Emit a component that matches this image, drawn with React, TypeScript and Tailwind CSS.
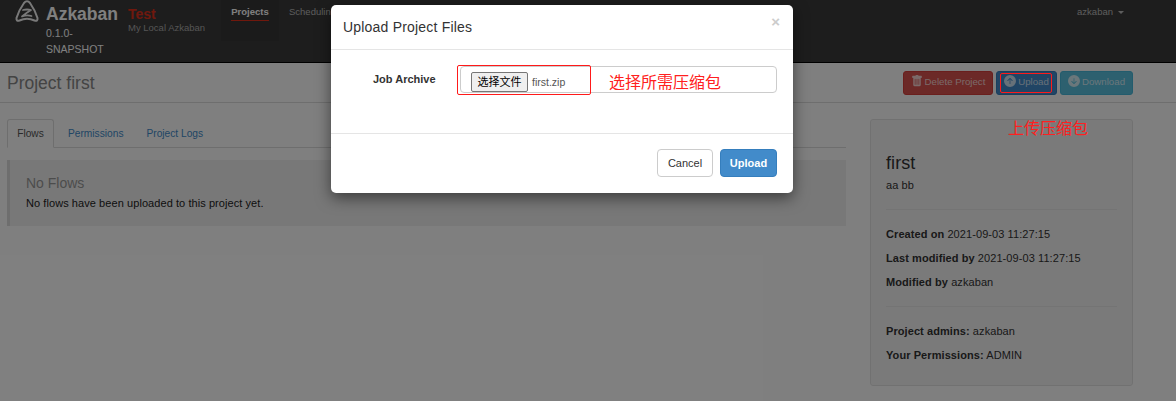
import React from "react";
import { BsArrowUpCircleFill, BsArrowDownCircleFill, BsTrashFill } from "react-icons/bs";

const sans = "font-['Liberation_Sans',Arial,'Noto_Sans_CJK_SC',sans-serif]";

function Logo() {
  return (
    <svg width="24" height="23" viewBox="0 0 24 23" fill="none" stroke="#f2f2f2" strokeWidth="2" strokeLinejoin="round" strokeLinecap="round">
      <path d="M9 3 Q12 -0.5 15 3 Q20 10 22.5 18 Q23 21.5 19.5 20.5 Q12 17 4.5 20.5 Q1 21.5 1.5 18 Q4 10 9 3 Z" />
      <path d="M8 10 Q12 9 16 10 Q11 13 7 16.5 Q12 14.5 16.5 16" strokeWidth="1.8" />
    </svg>
  );
}

function Btn({ bg, border, text, icon, extra }: { bg: string; border: string; text: string; icon: React.ReactNode; extra: string }) {
  return (
    <div className={`flex items-center justify-center whitespace-nowrap h-[24px] rounded-[3px] border gap-[2px] text-[9.7px] text-white/75 ${bg} ${border} ${extra}`}>
      <span className="-mt-[3px]">{icon}</span>
      <span>{text}</span>
    </div>
  );
}

export default function App() {
  return (
    <div className={`relative w-[1176px] h-[401px] overflow-hidden bg-white ${sans}`}>
      {/* navbar */}
      <div className="relative h-[63px] bg-[#3a3a3a] border-b border-black flex">
        <div className="pl-[15px] shrink-0"><Logo /></div>
        <div className="ml-[7px] w-[82px] shrink-0">
          <div className="text-[17.5px] font-bold leading-[20px] mt-[4px] text-white">Azkaban</div>
          <div className="text-[10.5px] leading-[16px] mt-[1px] text-white">0.1.0-<br />SNAPSHOT</div>
        </div>
        <div className="w-[93px] shrink-0">
          <div className="text-[14px] font-bold leading-[16px] mt-[6px] text-[#e0301a]">Test</div>
          <div className="text-[9.5px] leading-[12px] text-[#aaaaaa]">My Local Azkaban</div>
        </div>
        <div className="w-[58px] h-[41px] bg-[#363636] shrink-0 flex flex-col items-center pt-[6px]">
          <div className="text-[9.5px] leading-[12px] font-bold text-white pb-[2px] border-b border-[#e0301a]">Projects</div>
        </div>
        <div className="ml-[10px] pt-[6px] text-[9.5px] leading-[12px] text-[#bbbbbb]">Scheduling</div>
        <div className="ml-auto mr-[52px] pt-[6px] text-[9.5px] leading-[12px] text-[#bbbbbb] flex items-start gap-[5px] h-[18px]">
          azkaban
          <span className="mt-[5px] w-0 h-0 border-x-[3px] border-t-[3px] border-x-transparent border-t-[#bbbbbb]" />
        </div>
      </div>

      {/* project header */}
      <div className="h-[40px] bg-[#fefefe] border-b border-[#dddddd] flex items-center pl-[7px] pr-[43px]">
        <div className="text-[17.5px] text-[#888888] leading-[20px]">Project first</div>
        <div className="ml-auto flex gap-[3px]">
          <Btn bg="bg-[#d9534f]" border="border-[#d43f3a]" text="Delete Project" icon={<BsTrashFill size={12} />} extra="w-[90px]" />
          <Btn bg="bg-[#428bca]" border="border-[#357ebd]" text="Upload" icon={<BsArrowUpCircleFill size={12} />} extra="w-[61px]" />
          <Btn bg="bg-[#5bc0de]" border="border-[#46b8da]" text="Download" icon={<BsArrowDownCircleFill size={12} />} extra="w-[73px]" />
        </div>
      </div>

      {/* content */}
      <div className="flex pl-[7px] pt-[16px]">
        <div className="w-[839px] shrink-0">
          <div className="flex h-[29px] border-b border-[#dddddd] text-[10.2px]">
            <div className="w-[47px] h-[29px] rounded-t-[3px] border border-[#dddddd] border-b-white bg-white flex items-center justify-center pt-[1px] text-[#555555]">Flows</div>
            <div className="ml-[14px] text-[#428bca] leading-[29px]">Permissions</div>
            <div className="ml-[23px] text-[#428bca] leading-[29px]">Project Logs</div>
          </div>
          <div className="mt-[12px] h-[66px] bg-[#f1f1f1] border-l-[3px] border-[#dddddd] pl-[16px] pt-[15px]">
            <div className="text-[14px] leading-[16px] text-[#999999]">No Flows</div>
            <div className="text-[11px] tracking-[0.07px] leading-[14px] mt-[5px] text-[#222222]">No flows have been uploaded to this project yet.</div>
          </div>
        </div>
        <div className="ml-[24px] w-[263px] h-[267px] bg-[#f5f5f5] border border-[#e3e3e3] rounded-[3px] px-[15px] pt-[33px] text-[11px] tracking-[0.08px] text-[#333333]">
          <div className="text-[18px] leading-[20px]">first</div>
          <div className="mt-[5px] leading-[14px]">aa bb</div>
          <div className="mt-[17px] border-t border-[#e8e8e8]" />
          <div className="mt-[17px] leading-[14px]"><b>Created on</b> 2021-09-03 11:27:15</div>
          <div className="mt-[10px] leading-[14px]"><b>Last modified by</b> 2021-09-03 11:27:15</div>
          <div className="mt-[10px] leading-[14px]"><b>Modified by</b> azkaban</div>
          <div className="mt-[17px] border-t border-[#e8e8e8]" />
          <div className="mt-[17px] leading-[14px]"><b>Project admins:</b> azkaban</div>
          <div className="mt-[10px] leading-[14px]"><b>Your Permissions:</b> ADMIN</div>
        </div>
      </div>

      {/* backdrop */}
      <div className="absolute inset-0 bg-black/50" />

      {/* modal */}
      <div className="absolute left-[331px] top-[5px] w-[462px] h-[188px] bg-white rounded-[5px] shadow-[0_5px_15px_rgba(0,0,0,0.5)] flex flex-col">
        <div className="h-[45px] border-b border-[#e5e5e5] flex pl-[12px] pr-[13px] shrink-0">
          <div className="text-[14px] leading-[44px] text-[#333333] tracking-[0.2px]">Upload Project Files</div>
          <div className="ml-auto text-[15px] leading-[15px] mt-[9px] font-bold text-[#cccccc]">×</div>
        </div>
        <div className="h-[84px] border-b border-[#e5e5e5] shrink-0 flex items-start pt-[16px] pl-[42px]">
          <div className="text-[11px] font-bold leading-[28px] text-[#333333] w-[87px] mt-[-1px]">Job Archive</div>
          <div className="w-[317px] h-[27px] border border-[#cccccc] rounded-[4px] flex items-start pt-[5px] pl-[10px] text-[10.5px] leading-[20px] text-[#555555]">
            <div className="w-[57px] h-[20px] bg-[#efefef] border border-[#767676] rounded-[2px] flex items-center justify-center text-[11px] text-black">选择文件</div>
            <span className="ml-[4px]">first.zip</span>
          </div>
        </div>
        <div className="flex-1 flex justify-end items-start gap-[7px] pt-[15px] pr-[16px] text-[11px]">
          <div className="w-[56px] h-[28px] rounded-[4px] border border-[#cccccc] flex items-center justify-center text-[#333333]">Cancel</div>
          <div className="w-[57px] h-[28px] rounded-[4px] border border-[#357ebd] bg-[#428bca] flex items-center justify-center text-white font-bold">Upload</div>
        </div>
      </div>

      {/* annotations */}
      <div className="absolute left-[457px] top-[65px] w-[134px] h-[30px] border border-[#ff1a1a] rounded-[2px]" />
      <div className="absolute left-[609px] top-[70px] text-[16px] leading-[22px] font-normal text-[#ff2020] font-['Noto_Sans_CJK_SC',sans-serif]">选择所需压缩包</div>
      <div className="absolute left-[1000px] top-[73px] w-[52px] h-[20px] border border-[#ff1a1a] rounded-[2px]" />
      <div className="absolute left-[1008px] top-[116px] text-[16px] leading-[22px] font-normal text-[#ff2020] font-['Noto_Sans_CJK_SC',sans-serif]">上传压缩包</div>
    </div>
  );
}
